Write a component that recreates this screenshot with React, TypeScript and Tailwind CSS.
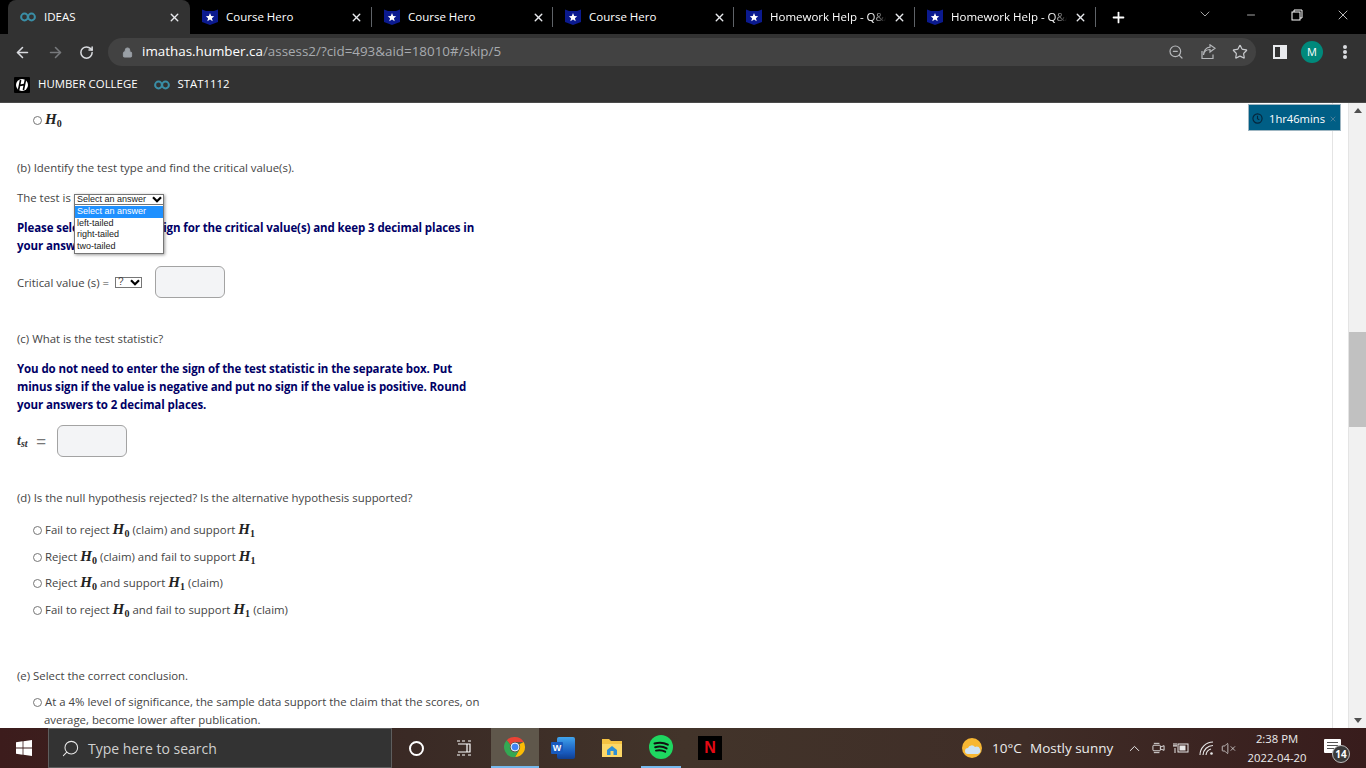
import React from "react";
import { ArrowLeft, ArrowRight, RotateCw, Lock, ZoomOut, Star, X, Plus, ChevronDown, Minus, ChevronUp, Search, VolumeX } from "lucide-react";

const Inf = ({ className = "" }: { className?: string }) => (
  <svg viewBox="0 0 16 10" className={"w-[16px] h-[10px] " + className} fill="none" stroke="#3a8ea6" strokeWidth="2">
    <circle cx="4.5" cy="5" r="3.4" />
    <circle cx="11.5" cy="5" r="3.4" />
  </svg>
);

const Shield = () => (
  <svg viewBox="0 0 16 16" className="w-[16px] h-[16px] shrink-0">
    <path d="M0 0.5 L4 2 H12 L16 0.5 V13 L8 16 L0 13 Z" fill="#0b1a8f" />
    <path d="M8 4 L9.2 7 L12.2 7.2 L9.9 9.2 L10.7 12.2 L8 10.5 L5.3 12.2 L6.1 9.2 L3.8 7.2 L6.8 7 Z" fill="#fff" />
  </svg>
);

const Tab = ({ title, hw, first }: { title: string; hw?: boolean; first?: boolean }) => (
  <div className={"h-[34px] flex items-center shrink-0 relative pl-[12px] " + (first ? "w-[182px]" : "w-[181px]")}>
    <Shield />
    {hw ? (
      <span className="ml-[8px] -mt-[1px] text-[11.5px] text-white whitespace-nowrap overflow-hidden w-[116px] [mask-image:linear-gradient(90deg,#000_88%,transparent)]">{title}</span>
    ) : (
      <span className="ml-[8px] -mt-[1px] text-[11.5px] text-white whitespace-nowrap w-[124px]">{title}</span>
    )}
    <X size={13} strokeWidth={2.6} className={"text-[#e8eaed] " + (hw ? "ml-[7px]" : "")} />
    <div className="ml-auto w-px h-[20px] bg-[#5f6368]" />
  </div>
);

const M = ({ c, s }: { c: string; s: string }) => (
  <span className="font-['Liberation_Serif',serif] italic font-bold text-[15px] leading-[0] text-[#222] tracking-[0.1px]">
    {c}
    <sub className="not-italic text-[10px] leading-[0] align-baseline relative top-[3px]">{s}</sub>
  </span>
);

const Radio = () => <span className="inline-block w-[9px] h-[9px] rounded-full border border-[#767676] bg-white mr-[3px] ml-[16px] align-[-0.5px]" />;

const Chev = () => (
  <svg viewBox="0 0 10 7" className="w-[10px] h-[7px]" fill="none" stroke="#000" strokeWidth="2.2">
    <path d="M1 1.2 L5 5.2 L9 1.2" />
  </svg>
);

const App = () => (
  <div className="h-screen w-full overflow-hidden flex flex-col bg-white font-['Open_Sans',sans-serif] relative">
    {/* tab strip */}
    <div className="h-[34px] bg-black flex items-center pl-[8px] shrink-0">
      <div className="w-[182px] h-[34px] bg-[#323232] rounded-t-[8px] flex items-center pl-[12px] shrink-0">
        <Inf />
        <span className="ml-[8px] -mt-[1px] text-[11.5px] text-white w-[124px]">IDEAS</span>
        <X size={13} strokeWidth={2.6} className="text-[#e8eaed]" />
      </div>
      <Tab title="Course Hero" first />
      <Tab title="Course Hero" />
      <Tab title="Course Hero" />
      <Tab title="Homework Help - Q&A" hw />
      <Tab title="Homework Help - Q&A" hw />
      <Plus size={17} strokeWidth={2.5} className="text-white ml-[14px]" />
      <ChevronDown size={16} strokeWidth={1.1} className="text-[#ddd] ml-[70px] -mt-[6px]" />
      <Minus size={12} strokeWidth={1.3} className="text-white ml-[32px] -mt-[4px]" />
      <svg viewBox="0 0 12 12" className="w-[12px] h-[12px] ml-[34px] -mt-[4px]" fill="none" stroke="#fff" strokeWidth="1"><rect x="1" y="3" width="8" height="8" /><path d="M3 3V1H11V9H9" /></svg>
      <X size={16} strokeWidth={1.1} className="text-white ml-[32px] -mt-[4px]" />
    </div>
    {/* toolbar */}
    <div className="h-[34px] bg-[#323232] flex items-center shrink-0 pt-[2px]">
      <ArrowLeft size={17} strokeWidth={2.2} className="text-[#dadce0] ml-[14px]" />
      <ArrowRight size={17} strokeWidth={2.2} className="text-[#77797c] ml-[16px]" />
      <RotateCw size={15} strokeWidth={2.4} className="text-[#dadce0] ml-[15px]" />
      <div className="ml-[14px] w-[1148px] h-[28px] rounded-full bg-[#424242] flex items-center pl-[14px]">
        <Lock size={11} fill="#9aa0a6" strokeWidth={2} className="text-[#9aa0a6]" />
        <span className="ml-[9px] text-[13.4px] -mt-[1px] text-white whitespace-nowrap">imathas.humber.ca<span className="text-[#a8abaf]">/assess2/?cid=493&amp;aid=18010#/skip/5</span></span>
        <ZoomOut size={16} strokeWidth={1.8} className="text-[#b5b7ba] ml-auto" />
        <svg viewBox="0 0 16 16" className="w-[16px] h-[16px] ml-[16px]" fill="none" stroke="#b5b7ba" strokeWidth="1.2">
          <path d="M2 7V14.5H13V10.5M3.5 11C4 7.5 7 5.5 10 5.5V8L15 4.2L10 0.8V3.2C6 3.2 3.5 7 3.5 11Z" />
        </svg>
        <Star size={16} strokeWidth={1.8} className="text-[#c8cacd] ml-[16px] mr-[8px]" />
      </div>
      <div className="ml-[17px] w-[14px] h-[14px] border-2 border-[#e8eaed] border-r-[7px]" />
      <div className="ml-[14px] w-[22px] h-[22px] rounded-full bg-[#00897b] text-white text-[11px] flex items-center justify-center">M</div>
      <div className="ml-[20px] flex flex-col gap-[1.5px]">
        <div className="w-[3.5px] h-[3.5px] rounded-full bg-[#dadce0]" />
        <div className="w-[3.5px] h-[3.5px] rounded-full bg-[#dadce0]" />
        <div className="w-[3.5px] h-[3.5px] rounded-full bg-[#dadce0]" />
      </div>
    </div>
    {/* bookmarks */}
    <div className="h-[35px] bg-[#323232] border-b border-[#4a4a4a] flex items-center shrink-0">
      <svg viewBox="0 0 16 16" className="ml-[14px] w-[16px] h-[16px]">
        <rect width="16" height="16" fill="#000" rx="1" />
        <circle cx="8" cy="8" r="6" fill="#fff" />
        <path d="M6.6 3L4.6 13M11.4 3L9.4 13M5 8.6L11 7.4" stroke="#000" strokeWidth="1.6" fill="none" />
      </svg>
      <span className="ml-[8px] text-[11.4px] -mt-[3px] text-white">HUMBER COLLEGE</span>
      <Inf className="ml-[16px]" />
      <span className="ml-[8px] text-[11.4px] -mt-[3px] text-white">STAT1112</span>
    </div>
    {/* page */}
    <div className="flex-1 min-h-0 flex relative overflow-hidden text-[11.4px] leading-[18px] text-[#444]">
      <div className="flex-1 min-w-0 border-r border-[#e4e4e4] mr-[1px]">
        <div className="pl-[17px] pt-[8px] w-[500px]">
          <div><Radio /><M c="H" s="0" /></div>
          <div className="mt-[30px]">(b) Identify the test type and find the critical value(s).</div>
          <div className="mt-[12px] flex items-center relative">
            The test is
            <div className="absolute left-[57px] top-[5px] w-[90px] z-10 shadow-[1px_1px_3px_rgba(0,0,0,0.4)] font-['Liberation_Sans',sans-serif] text-[9px] leading-[11.7px] text-[#222]">
              <div className="h-[11px] border border-[#767676] bg-white flex items-center pl-[2px] justify-between pr-[1px]">Select an answer <Chev /></div>
              <div className="border border-[#767676] border-t-0 bg-white h-[49px] pt-[1px]">
                <div className="bg-[#1e90ff] text-white pl-[2px]">Select an answer</div>
                <div className="pl-[2px]">left-tailed</div>
                <div className="pl-[2px]">right-tailed</div>
                <div className="pl-[2px]">two-tailed</div>
              </div>
            </div>
          </div>
          <div className="mt-[12px] font-bold text-[#000066] text-[11.5px] tracking-[-0.1px] whitespace-nowrap">
            <div>Please select the correct sign for the critical value(s) and keep 3 decimal places in</div>
            <div>your answer.</div>
          </div>
          <div className="mt-[11px] h-[32px] flex items-center">
            <span className="w-[98px] whitespace-nowrap pt-[1px]">Critical value (s) =</span>
            <div className="w-[27px] h-[11px] border border-[#767676] flex items-center justify-between pl-[2px] pr-[1px] text-[10px] font-['Liberation_Sans',sans-serif]">? <Chev /></div>
            <div className="ml-[13px] w-[70px] h-[32px] rounded-[6px] border border-[#a3a3a3] bg-[#f3f4f6]" />
          </div>
          <div className="mt-[32px]">(c) What is the test statistic?</div>
          <div className="mt-[12px] font-bold text-[#000066] text-[11.5px] tracking-[-0.1px] whitespace-nowrap">
            <div>You do not need to enter the sign of the test statistic in the separate box. Put</div>
            <div>minus sign if the value is negative and put no sign if the value is positive. Round</div>
            <div>your answers to 2 decimal places.</div>
          </div>
          <div className="mt-[11px] h-[32px] flex items-center">
            <span className="font-['Liberation_Serif',serif] italic font-bold text-[14px] text-[#333] w-[17px] whitespace-nowrap">t<sub className="text-[10px] leading-[0] align-baseline relative top-[2px]">st</sub></span>
            <span className="ml-[2px] text-[18px] text-[#777] w-[21px]">=</span>
            <div className="w-[70px] h-[32px] rounded-[6px] border border-[#a3a3a3] bg-[#f3f4f6]" />
          </div>
          <div className="mt-[32px]">(d) Is the null hypothesis rejected? Is the alternative hypothesis supported?</div>
          <div className="mt-[14px] whitespace-nowrap"><Radio />Fail to reject <M c="H" s="0" /> (claim) and support <M c="H" s="1" /></div>
          <div className="mt-[9px] whitespace-nowrap"><Radio />Reject <M c="H" s="0" /> (claim) and fail to support <M c="H" s="1" /></div>
          <div className="mt-[8px] whitespace-nowrap"><Radio />Reject <M c="H" s="0" /> and support <M c="H" s="1" /> (claim)</div>
          <div className="mt-[9px] whitespace-nowrap"><Radio />Fail to reject <M c="H" s="0" /> and fail to support <M c="H" s="1" /> (claim)</div>
          <div className="mt-[48px]">(e) Select the correct conclusion.</div>
          <div className="mt-[8px] whitespace-nowrap"><Radio />At a 4% level of significance, the sample data support the claim that the scores, on</div>
          <div className="pl-[27px] whitespace-nowrap">average, become lower after publication.</div>
        </div>
      </div>
      <div className="w-[15px] shrink-0 border-r border-[#e4e4e4]" />
      <div className="w-[17px] shrink-0 bg-[#f1f1f1] flex flex-col items-center relative">
        <div className="mt-[5px] w-0 h-0 border-x-[4px] border-x-transparent border-b-[5px] border-b-[#505050]" />
        <div className="mt-[219px] w-full h-[95px] bg-[#c1c1c1]" />
        <div className="mt-auto mb-[5px] w-0 h-0 border-x-[4px] border-x-transparent border-t-[5px] border-t-[#505050]" />
      </div>
      <div className="absolute left-[1248px] top-[1px] w-[93px] h-[27px] pt-[2px] bg-[#005e85] border border-[#9fb6c2] flex items-center pl-[3px] text-white text-[11.2px]">
        <svg viewBox="0 0 12 12" className="w-[11px] h-[11px]" fill="none" stroke="#06243a" strokeWidth="1.2"><circle cx="6" cy="6" r="5" /><path d="M6 3V6.3L8 7.5" /></svg>
        <span className="ml-[6px]">1hr46mins</span>
        <X size={8} className="text-[#6d8fa1] ml-[4px]" />
      </div>
    </div>
    {/* taskbar */}
    <div className="h-[40px] shrink-0 flex items-center bg-[linear-gradient(90deg,#3c1c1c_0%,#3a2a25_30%,#42342a_50%,#3f2d27_75%,#381c1c_100%)] text-white">
      <svg viewBox="0 0 16 16" className="w-[16px] h-[16px] ml-[16px] shrink-0" fill="#fff"><path d="M0 2.3L6.6 1.3V7.6H0ZM7.4 1.2L16 0V7.6H7.4ZM0 8.4H6.6V14.7L0 13.7ZM7.4 8.4H16V16L7.4 14.8Z" /></svg>
      <div className="ml-[16px] w-[344px] h-[40px] bg-[#333] border border-[#5e5e5e] flex items-center pl-[12px] shrink-0">
        <Search size={19} strokeWidth={1.3} className="text-[#e8e8e8] -scale-x-100" />
        <span className="ml-[8px] text-[14px] text-[#d0d0d0]">Type here to search</span>
      </div>
      <div className="ml-[17px] w-[15px] h-[15px] rounded-full border-[2.5px] border-white shrink-0" />
      <svg viewBox="0 0 16 16" className="w-[16px] h-[16px] ml-[32px] shrink-0" fill="none" stroke="#fff" strokeWidth="1.2"><path d="M1 1H4M6 1H9M12 1H15M2 4H14V12H2M11 4V12M1 15H4M6 15H9M12 15H15" /></svg>
      <div className="ml-[19px] w-[48px] h-[40px] bg-[#5f574b] border-b-[2px] border-[#76b9ed] flex items-center justify-center shrink-0">
        <svg viewBox="0 0 24 24" className="w-[22px] h-[22px]">
          <path d="M12 1a11 11 0 0 1 9.5 5.5H12a5.5 5.5 0 0 0-5 3.2L3 4.6A11 11 0 0 1 12 1Z" fill="#ea4335" />
          <path d="M21.5 6.5A11 11 0 0 1 12 23l4.7-8.1A5.5 5.5 0 0 0 16.7 9Z" fill="#fbbc05" />
          <path d="M3 4.6A11 11 0 0 0 12 23l4.7-8.1a5.5 5.5 0 0 1-9.7-5.2Z" fill="#34a853" />
          <circle cx="12" cy="12" r="4.3" fill="#4285f4" stroke="#fff" strokeWidth="1" />
        </svg>
      </div>
      <div className="ml-[12px] relative w-[24px] h-[22px] shrink-0">
        <div className="absolute right-0 top-0 w-[18px] h-[22px] rounded-[2px] bg-[linear-gradient(180deg,#41a5ee,#2b7cd3_35%,#185abd_70%,#103f91)]" />
        <div className="absolute left-0 top-[5px] w-[12px] h-[12px] bg-[#185abd] rounded-[1px] text-[9px] font-bold leading-[12px] text-center font-['Liberation_Sans',sans-serif]">W</div>
      </div>
      <svg viewBox="0 0 22 22" className="w-[22px] h-[22px] ml-[26px] shrink-0">
        <path d="M1 2H8L10 4H21V20H1Z" fill="#f5c242" />
        <path d="M1 7H21V20H1Z" fill="#fcd767" />
        <path d="M11 9L16 13V18H6V13Z" fill="#2d8fd6" />
        <rect x="9.5" y="14" width="3" height="4" fill="#fcd767" />
      </svg>
      <div className="ml-[18px] w-[40px] h-[40px] border-b-[2px] border-[#76b9ed] flex items-center justify-center shrink-0">
        <svg viewBox="0 0 24 24" className="w-[24px] h-[24px]">
          <circle cx="12" cy="12" r="12" fill="#1ed760" />
          <path d="M5.5 8.5C10 7.2 15 7.6 18.8 9.7M6.2 12.2C10 11.2 14.5 11.6 17.6 13.4M7 15.6C10 14.9 13.5 15.2 16.2 16.7" stroke="#111" strokeWidth="2" fill="none" strokeLinecap="round" />
        </svg>
      </div>
      <div className="ml-[17px] w-[24px] h-[24px] bg-black flex items-center justify-center shrink-0 font-['Liberation_Sans',sans-serif] font-bold text-[16px] text-[#e50914]">N</div>
      <svg viewBox="0 0 20 20" className="w-[20px] h-[20px] ml-[240px] shrink-0">
        <circle cx="10" cy="10" r="10" fill="#f7b733" />
        <path d="M6 16a3 3 0 0 1 0-6 4 4 0 0 1 7-1 3.5 3.5 0 0 1 3 7Z" fill="#cfe3f5" />
      </svg>
      <span className="ml-[10px] text-[13.5px] text-[#ececec] w-[38px] whitespace-nowrap shrink-0">10°C</span>
      <span className="text-[13.5px] text-[#ececec] w-[82px] whitespace-nowrap shrink-0">Mostly sunny</span>
      <ChevronUp size={17} strokeWidth={1.4} className="ml-[14px] text-[#e8e8e8] shrink-0" />
      <svg viewBox="0 0 14 14" className="w-[13px] h-[16px] ml-[9px] shrink-0" fill="none" stroke="#e8e8e8" strokeWidth="1"><rect x="1" y="4" width="8" height="6" rx="1" /><path d="M9 6L13 4.5V9.5L9 8M2 2H8M2 12H8" /></svg>
      <svg viewBox="0 0 16 12" className="w-[16px] h-[12px] ml-[8px] shrink-0" fill="none" stroke="#e8e8e8" strokeWidth="1"><rect x="5" y="2" width="10" height="8" /><rect x="7" y="4" width="5" height="4" fill="#e8e8e8" /><path d="M0 4H4M1 1V4M3 1V4M2 6V11" /></svg>
      <svg viewBox="0 0 15 15" className="w-[15px] h-[15px] ml-[10px] shrink-0" fill="none" stroke="#e8e8e8" strokeWidth="1.1">
        <path d="M1 14A13 13 0 0 1 14 1M4 14A10 10 0 0 1 14 4.5" />
        <path d="M7 14A7 7 0 0 1 12 8" />
        <circle cx="12.5" cy="12.5" r="1.3" fill="#e8e8e8" stroke="none" />
      </svg>
      <VolumeX size={15} strokeWidth={1.2} className="ml-[7px] text-[#e8e8e8] shrink-0" />
      <div className="ml-[7px] w-[68px] shrink-0 text-center text-[11.3px] leading-[19px] text-[#ececec] whitespace-nowrap">
        <div>2:38 PM</div>
        <div>2022-04-20</div>
      </div>
      <div className="ml-[13px] relative w-[17px] h-[14px] bg-white -mt-[5px] shrink-0 rounded-[1px] flex flex-col gap-[2px] p-[3px]">
        <div className="h-px bg-[#555]" /><div className="h-px bg-[#555]" /><div className="h-px bg-[#555]" />
        <div className="absolute -right-[9px] -bottom-[10px] w-[18px] h-[18px] rounded-full bg-[#3a3a3a] border border-[#bbb] text-[10px] font-bold leading-[16px] text-center text-white">14</div>
      </div>
    </div>
  </div>
);

export default App;
